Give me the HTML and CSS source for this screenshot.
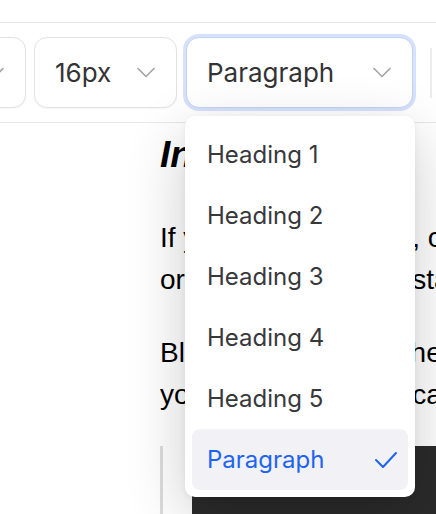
FILE: index.html
```html
<!DOCTYPE html>
<html lang="en">
<head>
<meta charset="utf-8">
<title>Editor</title>
<link rel="stylesheet" href="styles.css">
</head>
<body>
<div class="topbar"></div>
<div class="toolbar">
  <button class="select select-family">
    <span>Inter</span>
    <svg class="chev" viewBox="0 0 18 11"><path d="M1 1.5l8 8 8-8"/></svg>
  </button>
  <button class="select select-size">
    <span>16px</span>
    <svg class="chev" viewBox="0 0 18 11"><path d="M1 1.5l8 8 8-8"/></svg>
  </button>
  <div class="select-wrap">
    <button class="select select-block is-open">
      <span>Paragraph</span>
      <svg class="chev" viewBox="0 0 18 11"><path d="M1 1.5l8 8 8-8"/></svg>
    </button>
    <ul class="menu">
      <li class="item">Heading 1</li>
      <li class="item">Heading 2</li>
      <li class="item">Heading 3</li>
      <li class="item">Heading 4</li>
      <li class="item">Heading 5</li>
      <li class="item is-selected">Paragraph
        <svg class="check" viewBox="0 0 24 18"><path d="M2 9l7 7L22 2"/></svg>
      </li>
    </ul>
  </div>
  <div class="divider"></div>
</div>
<main class="content">
  <h2 class="title">Introduction</h2>
  <p>If you need any help, contact us by email<br>or feedback, please start a discussion.</p>
  <p>Blockquotes fit into the flow of the text, and<br>you can even add a callout block.</p>
  <blockquote class="quote">
    <pre class="code">npm install editor</pre>
  </blockquote>
</main>
</body>
</html>
```
FILE: styles.css
```css
* { box-sizing: border-box; }
html, body { margin: 0; padding: 0; }
body {
  width: 436px;
  height: 514px;
  overflow: hidden;
  background: #fff;
  font-family: "Liberation Sans", Arial, sans-serif;
  color: #000;
}
.topbar {
  height: 23px;
  border-bottom: 1px solid #e8e8ea;
}
.toolbar {
  display: flex;
  align-items: center;
  gap: 8px;
  margin-left: -100px;
  padding: 14px 0 14px;
  border-bottom: 1px solid #e8e8ea;
  white-space: nowrap;
}
.select {
  display: flex;
  align-items: center;
  justify-content: space-between;
  height: 71px;
  padding: 0 21px 0 20px;
  border: 1px solid #e2e2e6;
  border-radius: 13px;
  background: #fff;
  font-family: Inter, "Noto Sans", sans-serif;
  font-size: 26px;
  color: #333336;
  box-shadow: 0 1px 2px rgba(0,0,0,0.04);
  flex: none;
}
.select-family { width: 126px; }
.select-size { width: 143px; }
.select-wrap { position: relative; margin-left: 1px; flex: none; }
.select-block {
  width: 227px;
  border-color: #c3d2f6;
  box-shadow: 0 0 0 3px #d6e1fc;
}
.chev {
  width: 18px;
  height: 11px;
  fill: none;
  stroke: #a3a3a8;
  stroke-width: 1.6;
  stroke-linecap: round;
  stroke-linejoin: round;
  flex: none;
}
.divider {
  width: 2px;
  height: 50px;
  margin-left: 9px;
  background: #ececee;
  flex: none;
}
.menu {
  position: absolute;
  top: 79px;
  left: -1px;
  width: 230px;
  margin: 0;
  padding: 8px 7px 7px;
  list-style: none;
  background: #fff;
  border-radius: 10px;
  box-shadow: 0 18px 60px rgba(0,0,0,0.2), 0 2px 6px rgba(0,0,0,0.06);
  z-index: 10;
}
.item {
  display: flex;
  align-items: center;
  justify-content: space-between;
  height: 61px;
  padding: 0 10px 0 15px;
  border-radius: 8px;
  font-family: Inter, "Noto Sans", sans-serif;
  font-size: 24px;
  color: #38383c;
}
.item.is-selected {
  background: #f2f2f6;
  color: #1d64f2;
}
.check {
  width: 24px;
  height: 18px;
  fill: none;
  stroke: #1d64f2;
  stroke-width: 2;
  stroke-linecap: round;
  stroke-linejoin: round;
}
.content {
  padding-left: 160px;
  width: 900px;
}
.title {
  margin: 10px 0 0;
  font-size: 37px;
  line-height: 1.2;
  font-style: italic;
  font-weight: bold;
}
.content p {
  margin: 40px 0 0;
  font-size: 28px;
  line-height: 42px;
  white-space: nowrap;
}
.content p + p { margin-top: 31px; }
.quote {
  margin: 30px 0 0;
  padding-left: 29px;
  border-left: 3px solid #dcdcdc;
  height: 80px;
}
.code {
  margin: 1px 0 0;
  height: 80px;
  background: #2b2b2b;
  color: #eee;
  font-family: "Liberation Mono", monospace;
  font-size: 20px;
  padding: 70px 20px 0;
}
```
